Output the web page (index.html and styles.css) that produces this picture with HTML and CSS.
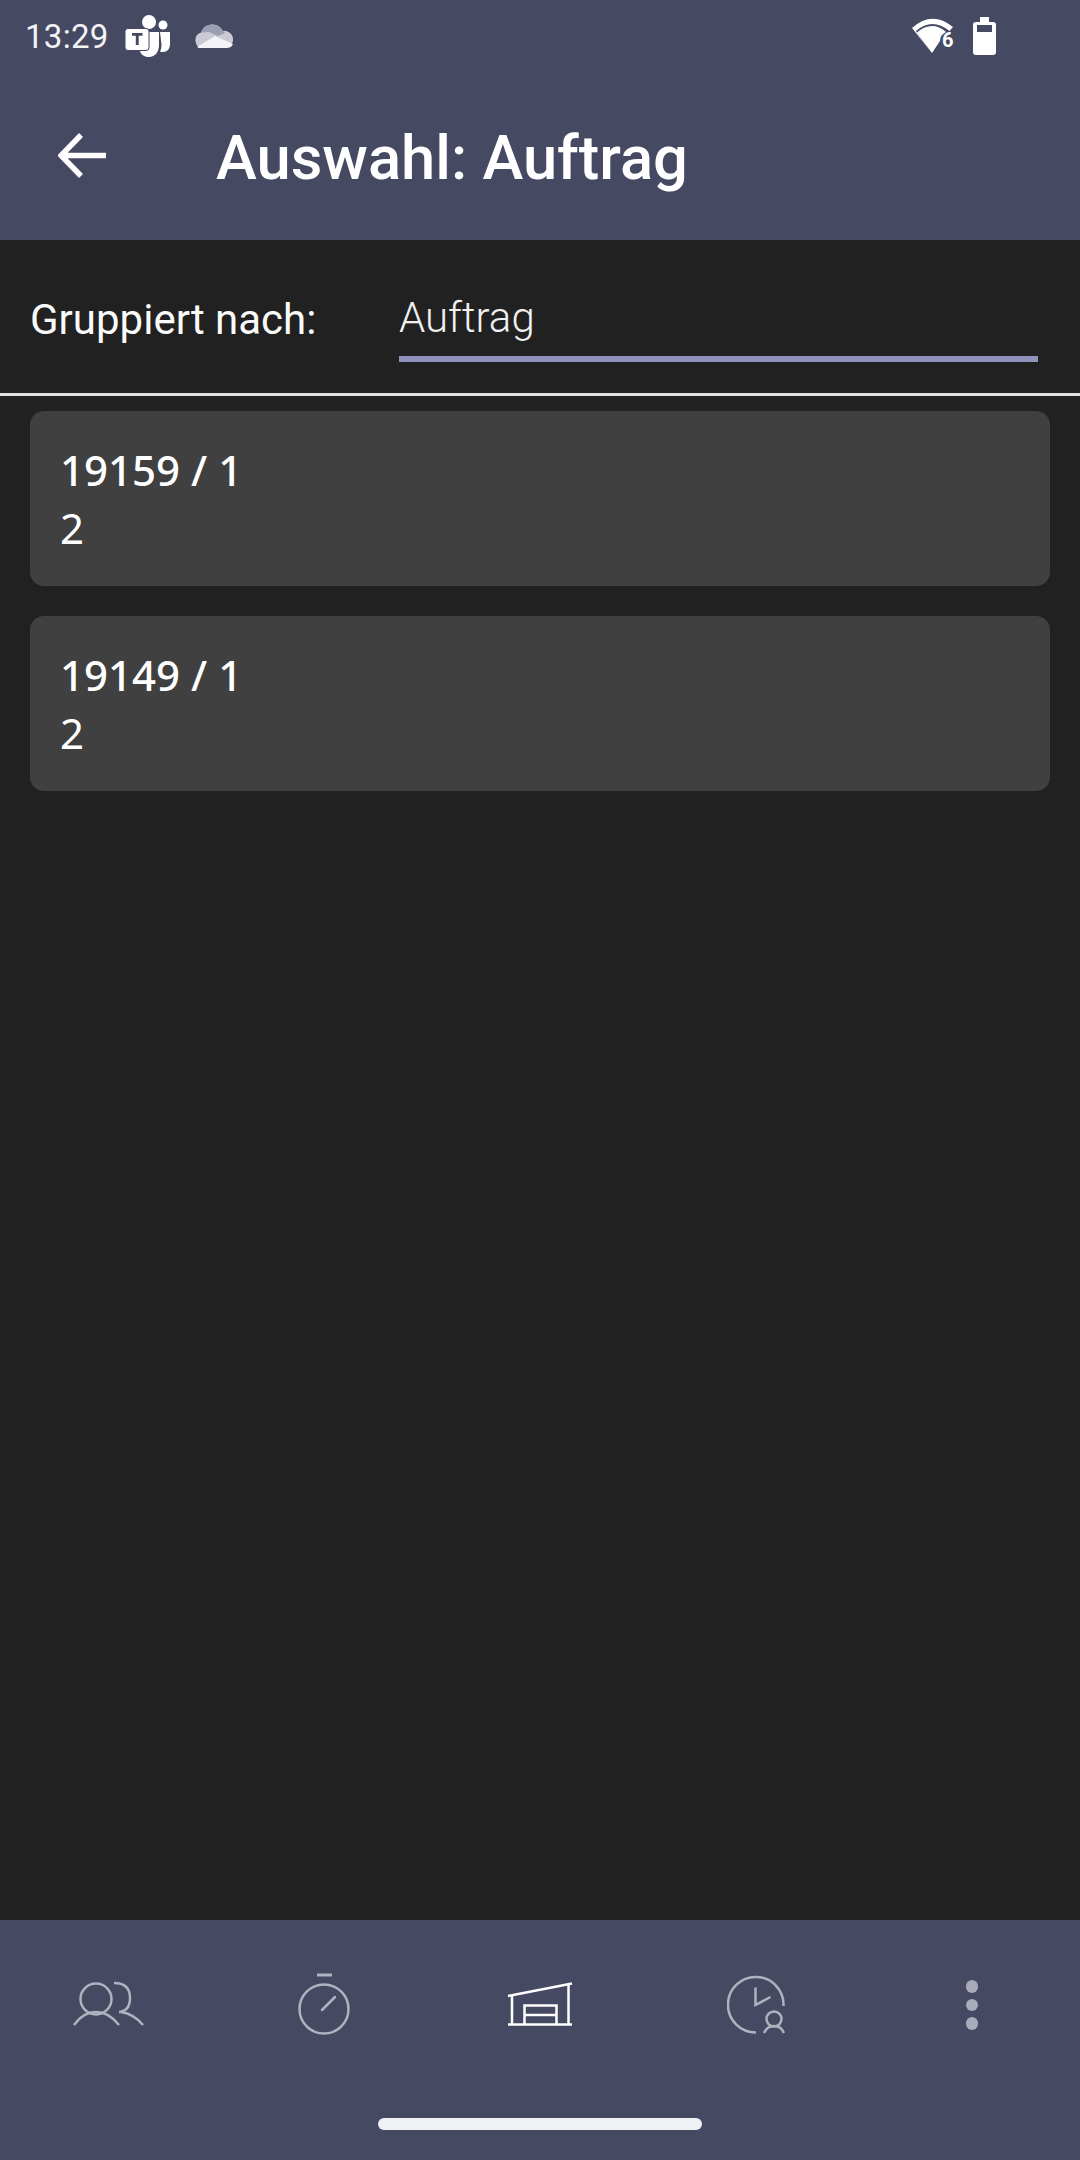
FILE: index.html
```html
<!DOCTYPE html>
<html lang="de">
<head>
<meta charset="utf-8">
<title>Auswahl: Auftrag</title>
<link rel="stylesheet" href="styles.css">
</head>
<body>
<div class="app">
  <header class="top">
    <div class="status">
      <div class="status-left">
        <span class="time">13:29</span>
        <svg class="ic-teams" viewBox="0 0 46 44" width="46" height="44">
          <circle cx="24" cy="8" r="7" fill="#fff"/>
          <circle cx="38" cy="11" r="4.500" fill="#fff"/>
          <path d="M35 18h10v12c0 5-3 8-7 8-1 0-2 0-3-.5 1-2 1.500-4 1.500-7z" fill="#fff"/>
          <path d="M15 18h19v13c0 7-4 12-10 12-4 0-8-2-9-6z" fill="#fff"/>
          <rect x="0" y="14.500" width="24" height="22" rx="3" fill="#fff" stroke="#454962" stroke-width="1"/>
          <path d="M7 19h10.500v2.800h-3.800V31h-2.900v-9.200H7z" fill="#454962"/>
        </svg>
        <svg class="ic-cloud" viewBox="0 0 42 26" width="42" height="26">
          <path d="M9 25a8 8 0 0 1-1-15.500A12 12 0 0 1 30 8a8.500 8.500 0 0 1 3 17z" fill="#c9cad5"/>
          <path d="M8 9.500A12 12 0 0 1 30 8l2 2-7 3-9-4z" fill="#9b9db0"/>
          <path d="M4 24 22 13l18 8c-1 3-4 4-7 4H9c-2 0-4 0-5-1z" fill="#f4f4f7"/>
        </svg>
      </div>
      <div class="status-right">
        <svg class="ic-wifi" viewBox="0 0 46 38" width="46" height="38">
          <path d="M3 11Q23-7 44 10l-3.500 4Q23 0 7 14l16 22z" fill="#fff"/>
          <path d="M8 15.500Q23 3 37 15 31 18 31 24l-8 12z" fill="#fff"/>
          <text class="wifi-num" x="33" y="30">6</text>
        </svg>
        <svg class="ic-batt" viewBox="0 0 23 38" width="23" height="38">
          <path d="M7 0h9v5h4a3 3 0 0 1 3 3v27a3 3 0 0 1-3 3H3a3 3 0 0 1-3-3V8a3 3 0 0 1 3-3h4z" fill="#fff"/>
          <rect x="4" y="8" width="15" height="7" fill="#454962"/>
        </svg>
      </div>
    </div>
    <div class="appbar">
      <svg class="ic-back" viewBox="0 0 48 48" width="48" height="48">
        <path d="M48 24.500H3M23 4 3 24.500 23 45" fill="none" stroke="#fff" stroke-width="5.500"/>
      </svg>
      <h1 class="title">Auswahl: Auftrag</h1>
    </div>
  </header>

  <section class="filter">
    <span class="filter-label">Gruppiert nach:</span>
    <div class="filter-field"><span class="filter-value">Auftrag</span></div>
  </section>

  <main class="list">
    <article class="card">
      <div class="card-title">19159 / 1</div>
      <div class="card-count">2</div>
    </article>
    <article class="card">
      <div class="card-title">19149 / 1</div>
      <div class="card-count">2</div>
    </article>
  </main>

  <footer class="bottom">
    <nav class="nav">
      <div class="nav-item">
        <svg viewBox="0 0 72 46" width="72" height="46" fill="none" stroke="#b0b2bf" stroke-width="2.500">
          <circle cx="24" cy="18" r="15.500"/>
          <path d="M2 44Q11 31 24 31T47 44"/>
          <path d="M42 2Q58 2 58 17 58 30 47 31"/>
          <path d="M49 31Q62 33 71 44"/>
        </svg>
      </div>
      <div class="nav-item">
        <svg viewBox="0 0 54 62" width="54" height="62" fill="none" stroke="#b0b2bf" stroke-width="2.500">
          <path d="M20 2h15" stroke-width="3"/>
          <circle cx="27" cy="36" r="24.500"/>
          <path d="M25 37 38 24" stroke-linecap="round"/>
        </svg>
      </div>
      <div class="nav-item">
        <svg viewBox="0 0 66 44" width="66" height="44" fill="none" stroke="#fff" stroke-width="2.500">
          <path d="M1 14 65 1.500"/>
          <path d="M5 13v29M61.500 2v40"/>
          <path d="M1 42.500h64"/>
          <path d="M17.500 42V23.500h32V42M17.500 33h32"/>
        </svg>
      </div>
      <div class="nav-item">
        <svg viewBox="0 0 58 59" width="58" height="59" fill="none" stroke="#b0b2bf" stroke-width="2.500">
          <path d="M56.500 31A27.800 27.800 0 1 0 29 57.500"/>
          <path d="M28.500 12.500v17.500l15-8"/>
          <circle cx="47" cy="44" r="7.500"/>
          <path d="M37 58Q40 51 47 51T57 58"/>
        </svg>
      </div>
      <div class="nav-item">
        <div class="dots"><i class="dot"></i><i class="dot"></i><i class="dot"></i></div>
      </div>
    </nav>
    <div class="gesture"></div>
  </footer>
</div>
</body>
</html>
```

FILE: styles.css
```css
* { box-sizing: border-box; }
html, body { margin: 0; padding: 0; }
body { background: #212121; font-family: "Roboto", "Liberation Sans", sans-serif; color: #fff; }
.app { width: 1080px; height: 2160px; display: flex; flex-direction: column; overflow: hidden; }

.top { height: 240px; background: #454962; display: flex; flex-direction: column; flex: none; }
.status { height: 72px; padding: 0 84px 0 25px; display: flex; justify-content: space-between; align-items: center; }
.status-left { display: flex; align-items: center; }
.status-right { display: flex; align-items: center; gap: 18px; }
.time { font-size: 33px; letter-spacing: .3px; color: #f3f3f6; width: 100px; }
.ic-cloud { margin-left: 22px; }
.wifi-num { font: 700 20px "Roboto", sans-serif; fill: #fff; }

.appbar { flex: 1; display: flex; align-items: center; padding: 0 0 0 58px; }
.ic-back { flex: none; margin-top: -2px; }
.title { margin: 6px 0 0 110px; font-size: 61.500px; font-weight: 500; line-height: 1; }

.filter { flex: none; height: 156px; display: flex; align-items: center; padding: 4px 42px 0 30px; border-bottom: 3px solid #e0e0e0; }
.filter-label { width: 369px; padding-top: 2px; font-size: 42px; flex: none; color: #fafafa; }
.filter-field { flex: 1; height: 86px; border-bottom: 6px solid #8f93bb; display: flex; align-items: center; }
.filter-value { padding-top: 4px; font-size: 42px; font-weight: 300; color: #f0f0f0; }

.list { flex: 1; padding: 15px 30px 0; display: flex; flex-direction: column; gap: 30px; }
.card { height: 175px; background: #404040; border-radius: 14px; padding: 32px 30px 0; }
.card-title { font: 500 42px/54px "Noto Sans", sans-serif; }
.card-count { font: 400 42px/62px "Noto Sans", sans-serif; }

.bottom { flex: none; height: 240px; background: #454962; display: flex; flex-direction: column; }
.nav { height: 168px; display: flex; }
.nav-item { flex: 1; display: flex; align-items: center; justify-content: center; }
.dots { display: flex; flex-direction: column; gap: 6px; padding-top: 2px; }
.dot { display: block; width: 12.500px; height: 12.500px; border-radius: 50%; background: #a9abba; }
.gesture { width: 324px; height: 12px; margin: 30px auto 0; background: #eff1f3; border-radius: 6px; }
```
